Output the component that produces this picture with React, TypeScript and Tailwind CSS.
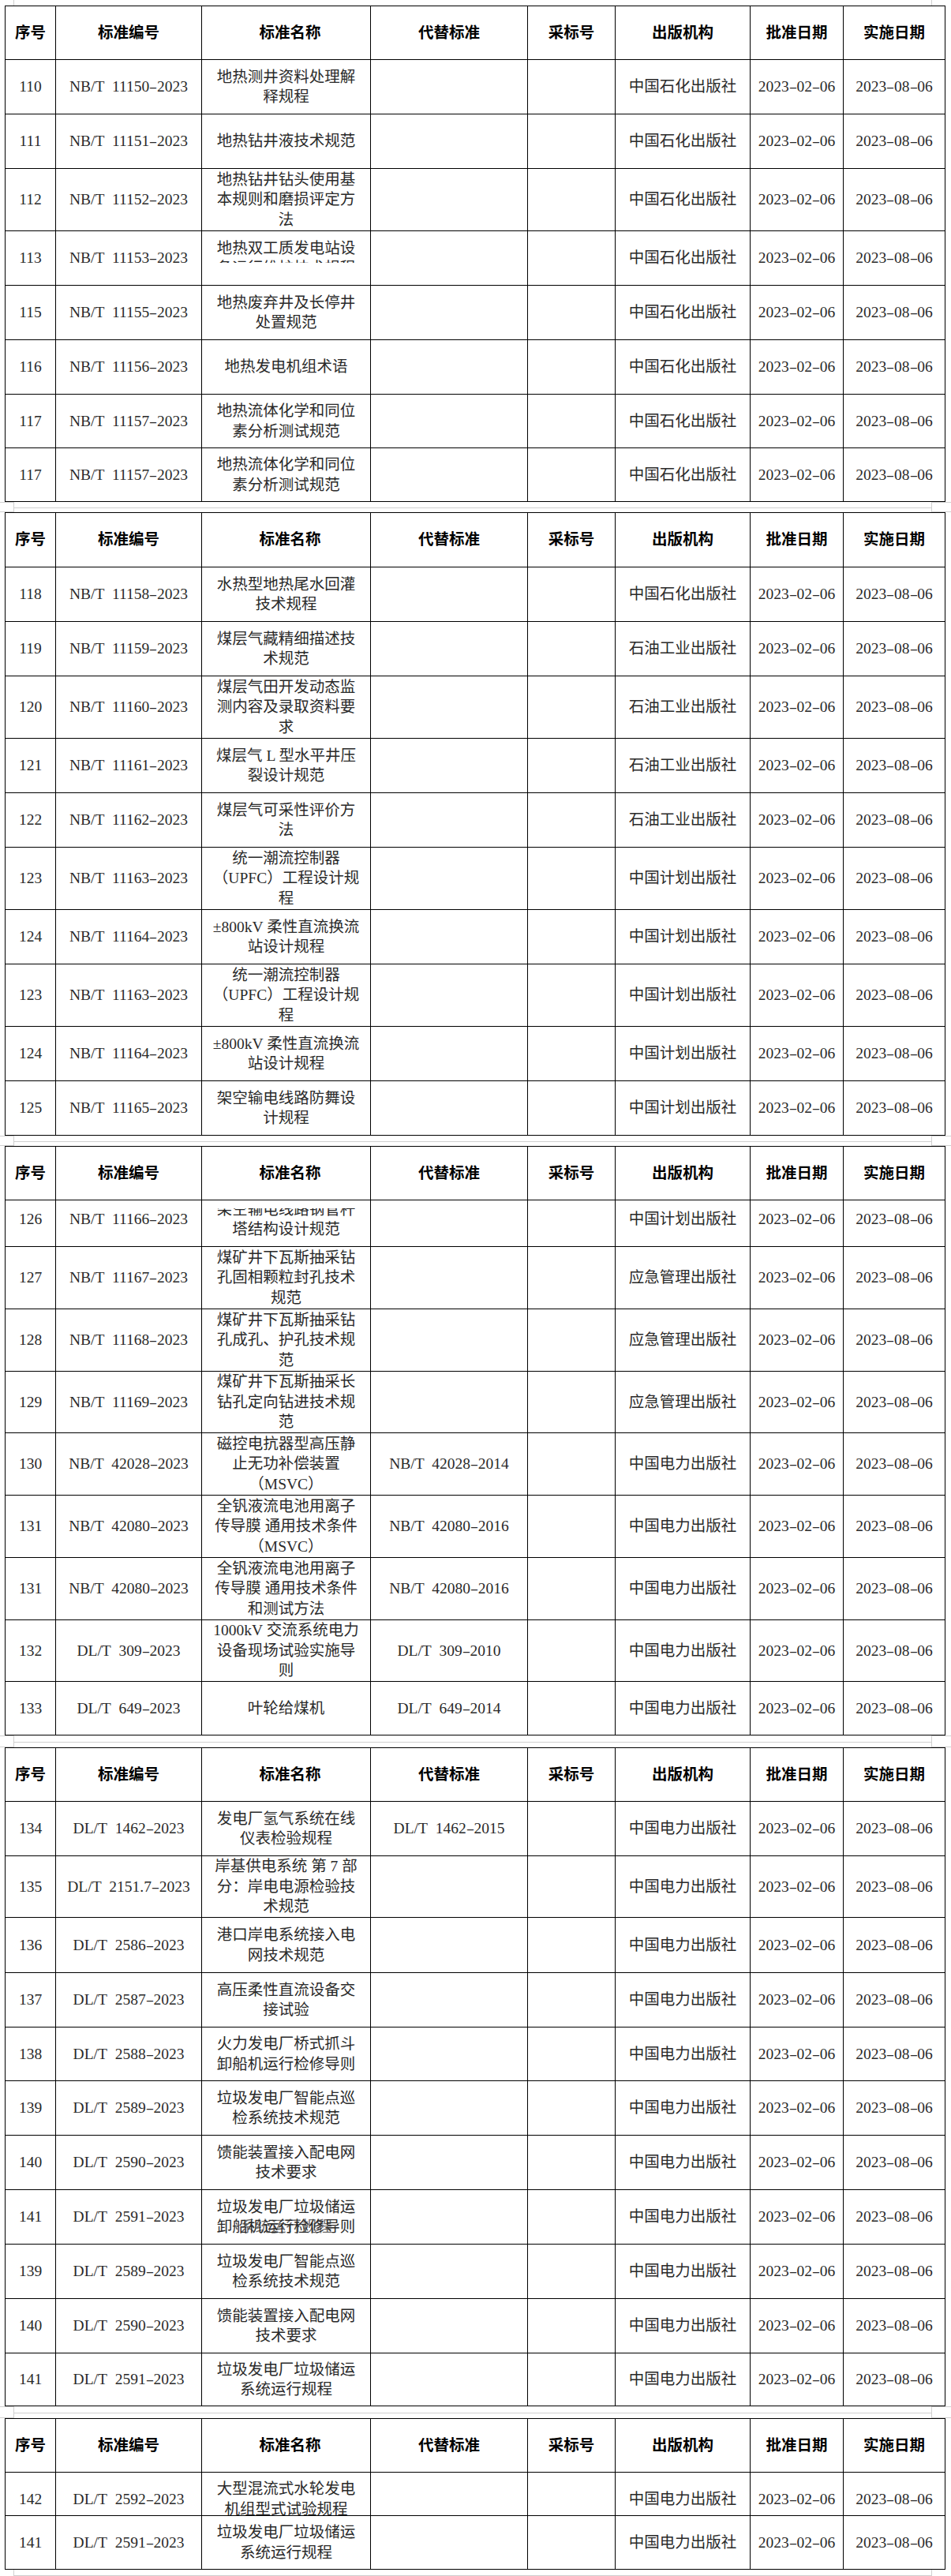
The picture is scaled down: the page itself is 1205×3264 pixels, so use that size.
import React from "react"

type Row = {
  no: string
  code: string
  name: string[]
  rep?: string
  pub: string
  h: number
  kind?: "clipTop" | "clipBottom" | "clipName" | "overlay"
}

const APPROVED = "2023-02-06"
const EFFECTIVE = "2023-08-06"

const HEIGHT: Record<number, string> = {
  55: "h-[55px]",
  59: "h-[59px]",
  67: "h-[67px]",
  68: "h-[68px]",
  69: "h-[69px]",
  70: "h-[70px]",
  78: "h-[78px]",
  79: "h-[79px]",
  81: "h-[81px]",
}

const SH = "中国石化出版社"
const SY = "石油工业出版社"
const JH = "中国计划出版社"
const YJ = "应急管理出版社"
const DL = "中国电力出版社"

const tables: { header: number; rows: Row[] }[] = [
  {
    header: 68,
    rows: [
      { no: "110", code: "NB/T 11150-2023", name: ["地热测井资料处理解", "释规程"], pub: SH, h: 69 },
      { no: "111", code: "NB/T 11151-2023", name: ["地热钻井液技术规范"], pub: SH, h: 69 },
      { no: "112", code: "NB/T 11152-2023", name: ["地热钻井钻头使用基", "本规则和磨损评定方", "法"], pub: SH, h: 79 },
      { no: "113", code: "NB/T 11153-2023", name: ["地热双工质发电站设", "备运行维护技术规程"], pub: SH, h: 69, kind: "clipName" },
      { no: "115", code: "NB/T 11155-2023", name: ["地热废弃井及长停井", "处置规范"], pub: SH, h: 69 },
      { no: "116", code: "NB/T 11156-2023", name: ["地热发电机组术语"], pub: SH, h: 69 },
      { no: "117", code: "NB/T 11157-2023", name: ["地热流体化学和同位", "素分析测试规范"], pub: SH, h: 68 },
      { no: "117", code: "NB/T 11157-2023", name: ["地热流体化学和同位", "素分析测试规范"], pub: SH, h: 68 },
    ],
  },
  {
    header: 69,
    rows: [
      { no: "118", code: "NB/T 11158-2023", name: ["水热型地热尾水回灌", "技术规程"], pub: SH, h: 69 },
      { no: "119", code: "NB/T 11159-2023", name: ["煤层气藏精细描述技", "术规范"], pub: SY, h: 69 },
      { no: "120", code: "NB/T 11160-2023", name: ["煤层气田开发动态监", "测内容及录取资料要", "求"], pub: SY, h: 79 },
      { no: "121", code: "NB/T 11161-2023", name: ["煤层气 L 型水平井压", "裂设计规范"], pub: SY, h: 69 },
      { no: "122", code: "NB/T 11162-2023", name: ["煤层气可采性评价方", "法"], pub: SY, h: 69 },
      { no: "123", code: "NB/T 11163-2023", name: ["统一潮流控制器", "（UPFC）工程设计规", "程"], pub: JH, h: 79 },
      { no: "124", code: "NB/T 11164-2023", name: ["±800kV 柔性直流换流", "站设计规程"], pub: JH, h: 69 },
      { no: "123", code: "NB/T 11163-2023", name: ["统一潮流控制器", "（UPFC）工程设计规", "程"], pub: JH, h: 79 },
      { no: "124", code: "NB/T 11164-2023", name: ["±800kV 柔性直流换流", "站设计规程"], pub: JH, h: 69 },
      { no: "125", code: "NB/T 11165-2023", name: ["架空输电线路防舞设", "计规程"], pub: JH, h: 69 },
    ],
  },
  {
    header: 68,
    rows: [
      { no: "126", code: "NB/T 11166-2023", name: ["架空输电线路钢管杆", "塔结构设计规范"], pub: JH, h: 59, kind: "clipTop" },
      { no: "127", code: "NB/T 11167-2023", name: ["煤矿井下瓦斯抽采钻", "孔固相颗粒封孔技术", "规范"], pub: YJ, h: 79 },
      { no: "128", code: "NB/T 11168-2023", name: ["煤矿井下瓦斯抽采钻", "孔成孔、护孔技术规", "范"], pub: YJ, h: 79 },
      { no: "129", code: "NB/T 11169-2023", name: ["煤矿井下瓦斯抽采长", "钻孔定向钻进技术规", "范"], pub: YJ, h: 78 },
      { no: "130", code: "NB/T 42028-2023", name: ["磁控电抗器型高压静", "止无功补偿装置", "（MSVC）"], rep: "NB/T 42028-2014", pub: DL, h: 79 },
      { no: "131", code: "NB/T 42080-2023", name: ["全钒液流电池用离子", "传导膜 通用技术条件", "（MSVC）"], rep: "NB/T 42080-2016", pub: DL, h: 79 },
      { no: "131", code: "NB/T 42080-2023", name: ["全钒液流电池用离子", "传导膜 通用技术条件", "和测试方法"], rep: "NB/T 42080-2016", pub: DL, h: 79 },
      { no: "132", code: "DL/T 309-2023", name: ["1000kV 交流系统电力", "设备现场试验实施导", "则"], rep: "DL/T 309-2010", pub: DL, h: 78 },
      { no: "133", code: "DL/T 649-2023", name: ["叶轮给煤机"], rep: "DL/T 649-2014", pub: DL, h: 68 },
    ],
  },
  {
    header: 68,
    rows: [
      { no: "134", code: "DL/T 1462-2023", name: ["发电厂氢气系统在线", "仪表检验规程"], rep: "DL/T 1462-2015", pub: DL, h: 69 },
      { no: "135", code: "DL/T 2151.7-2023", name: ["岸基供电系统 第 7 部", "分：岸电电源检验技", "术规范"], pub: DL, h: 78 },
      { no: "136", code: "DL/T 2586-2023", name: ["港口岸电系统接入电", "网技术规范"], pub: DL, h: 70 },
      { no: "137", code: "DL/T 2587-2023", name: ["高压柔性直流设备交", "接试验"], pub: DL, h: 69 },
      { no: "138", code: "DL/T 2588-2023", name: ["火力发电厂桥式抓斗", "卸船机运行检修导则"], pub: DL, h: 68 },
      { no: "139", code: "DL/T 2589-2023", name: ["垃圾发电厂智能点巡", "检系统技术规范"], pub: DL, h: 69 },
      { no: "140", code: "DL/T 2590-2023", name: ["馈能装置接入配电网", "技术要求"], pub: DL, h: 69 },
      { no: "141", code: "DL/T 2591-2023", name: ["垃圾发电厂垃圾储运", "卸船机运行检修导则"], pub: DL, h: 69, kind: "overlay" },
      { no: "139", code: "DL/T 2589-2023", name: ["垃圾发电厂智能点巡", "检系统技术规范"], pub: DL, h: 69 },
      { no: "140", code: "DL/T 2590-2023", name: ["馈能装置接入配电网", "技术要求"], pub: DL, h: 69 },
      { no: "141", code: "DL/T 2591-2023", name: ["垃圾发电厂垃圾储运", "系统运行规程"], pub: DL, h: 67 },
    ],
  },
  {
    header: 68,
    rows: [
      { no: "142", code: "DL/T 2592-2023", name: ["大型混流式水轮发电", "机组型式试验规程"], pub: DL, h: 55, kind: "clipBottom" },
      { no: "141", code: "DL/T 2591-2023", name: ["垃圾发电厂垃圾储运", "系统运行规程"], pub: DL, h: 68 },
    ],
  },
]

// SimSun-like half-width spacing for hyphens and spaces
function Latin({ text }: { text: string }) {
  const parts = text.split(/([- ])/)
  return (
    <>
      {parts.map((part, i) => {
        if (part === "-") {
          return (
            <span key={i} className="inline-block w-[0.5em] scale-x-[1.6] text-center">
              -
            </span>
          )
        }
        if (part === " ") {
          return (
            <span key={i} className="inline-block w-[0.5em]">
              {"\u00a0"}
            </span>
          )
        }
        return <span key={i}>{part}</span>
      })}
    </>
  )
}

const cellBase = "flex items-center justify-center text-center whitespace-nowrap"

function HeaderRow({ h }: { h: number }) {
  const labels = ["序号", "标准编号", "标准名称", "代替标准", "采标号", "出版机构", "批准日期", "实施日期"]
  return (
    <div className={`${HEIGHT[h]} border-t border-black`}>
      <div className="grid h-full grid-cols-[63px_185px_214px_199px_111px_171px_118px_129px] font-bold text-black">
        {labels.map((label, i) => (
          <div
            key={label}
            className={`${cellBase} ${i > 0 ? "border-l border-black" : ""} ${i === 2 ? "pl-[10px]" : ""}`}
          >
            {label}
          </div>
        ))}
      </div>
    </div>
  )
}

function NameLines({ lines }: { lines: string[] }) {
  return (
    <div className="flex flex-col items-center">
      {lines.map((line, i) => (
        <div key={i} className="whitespace-nowrap">
          {line}
        </div>
      ))}
    </div>
  )
}

function DataRow({ row }: { row: Row }) {
  let innerClass = "h-full"
  if (row.kind === "clipTop") innerClass = "h-[68px] -mt-[10px]"
  if (row.kind === "clipBottom") innerClass = "h-[67px]"

  let nameCell: React.ReactNode = <NameLines lines={row.name} />
  if (row.kind === "clipName") {
    nameCell = (
      <div className="h-[40px] self-start overflow-hidden pt-[8.5px]">
        <NameLines lines={row.name} />
      </div>
    )
  }
  if (row.kind === "clipTop") {
    // the first line is cut through the middle in the reference
    nameCell = (
      <div className="mt-[20px] h-[48px] self-start overflow-hidden">
        <div className="-mt-[11.5px]">
          <NameLines lines={row.name} />
        </div>
      </div>
    )
  }
  if (row.kind === "overlay") {
    nameCell = (
      <div className="relative">
        <NameLines lines={row.name} />
        <div className="absolute inset-x-0 bottom-0 text-center whitespace-nowrap opacity-70">系统运行规程</div>
      </div>
    )
  }

  return (
    <div className={`${HEIGHT[row.h]} overflow-hidden border-t border-black`}>
      <div className={`grid ${innerClass} grid-cols-[63px_185px_214px_199px_111px_171px_118px_129px] text-[#2a2a2a]`}>
        <div className={cellBase}>
          <Latin text={row.no} />
        </div>
        <div className={`${cellBase} border-l border-black`}>
          <Latin text={row.code} />
        </div>
        <div className={`${cellBase} border-l border-black`}>{nameCell}</div>
        <div className={`${cellBase} border-l border-black`}>{row.rep ? <Latin text={row.rep} /> : null}</div>
        <div className={`${cellBase} border-l border-black`} />
        <div className={`${cellBase} border-l border-black`}>{row.pub}</div>
        <div className={`${cellBase} border-l border-black`}>
          <Latin text={APPROVED} />
        </div>
        <div className={`${cellBase} border-l border-black`}>
          <Latin text={EFFECTIVE} />
        </div>
      </div>
    </div>
  )
}

function Table({ header, rows }: { header: number; rows: Row[] }) {
  return (
    <div className="ml-[6px] w-[1192px] border-x border-b border-black">
      <HeaderRow h={header} />
      {rows.map((row, i) => (
        <DataRow key={i} row={row} />
      ))}
    </div>
  )
}

// page break band with Word's margin corner marks
function PageBreak({ size }: { size: "h-[13px]" | "h-[14px]" | "h-[15px]" }) {
  return (
    <div className={`relative ${size}`}>
      <div className="absolute left-0 top-0 h-px w-[17px] bg-[#d0d0d0]" />
      <div className="absolute bottom-0 left-0 h-px w-[17px] bg-[#d0d0d0]" />
      <div className="absolute inset-y-0 left-[17px] w-px bg-[#d0d0d0]" />
      <div className="absolute left-[17px] right-[24px] top-1/2 h-px bg-[#d0d0d0]" />
      <div className="absolute right-0 top-0 h-px w-[24px] bg-[#d0d0d0]" />
      <div className="absolute bottom-0 right-0 h-px w-[24px] bg-[#d0d0d0]" />
      <div className="absolute inset-y-0 right-[24px] w-px bg-[#d0d0d0]" />
    </div>
  )
}

export default function App() {
  return (
    <div className="h-[3264px] w-[1205px] overflow-hidden bg-white font-['Liberation_Serif','Noto_Sans_CJK_SC',serif] text-[19.5px] leading-[25.5px]">
      <div className="relative h-[7px]">
        <div className="absolute inset-y-0 left-[17px] w-px bg-[#d0d0d0]" />
        <div className="absolute inset-y-0 right-[24px] w-px bg-[#d0d0d0]" />
      </div>
      <Table {...tables[0]} />
      <PageBreak size="h-[13px]" />
      <Table {...tables[1]} />
      <PageBreak size="h-[13px]" />
      <Table {...tables[2]} />
      <PageBreak size="h-[15px]" />
      <Table {...tables[3]} />
      <PageBreak size="h-[15px]" />
      <Table {...tables[4]} />
      <div className="relative h-[10px]">
        <div className="absolute inset-y-0 left-[17px] w-px bg-[#d0d0d0]" />
        <div className="absolute left-[17px] right-[24px] top-[7px] h-px bg-[#d0d0d0]" />
        <div className="absolute inset-y-0 right-[24px] w-px bg-[#d0d0d0]" />
      </div>
    </div>
  )
}
